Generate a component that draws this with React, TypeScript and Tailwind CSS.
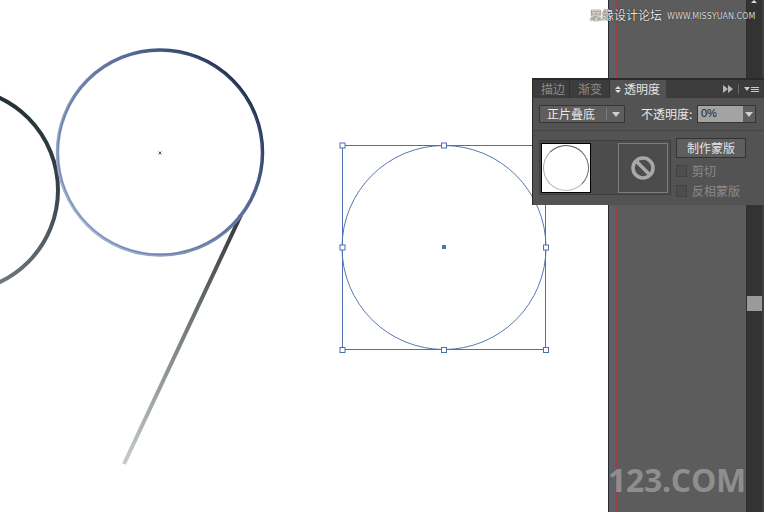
const cjk = 'font-["Noto_Sans_CJK_SC","Liberation_Sans",sans-serif]';

function Handle({ x, y }: { x: number; y: number }) {
  return <rect x={x - 2.5} y={y - 2.5} width={5} height={5} fill="#fff" stroke="#4f6fae" />;
}

function Artwork() {
  return (
    <svg className="h-[512px] w-[608px]" viewBox="0 0 608 512" fill="none">
      <defs>
        <linearGradient id="leftRing" x1="0" y1="88" x2="0" y2="292" gradientUnits="userSpaceOnUse">
          <stop offset="0" stopColor="#222f36" />
          <stop offset="0.5" stopColor="#364349" />
          <stop offset="1" stopColor="#727b7e" />
        </linearGradient>
        <linearGradient id="mainRing" x1="250" y1="85" x2="75" y2="225" gradientUnits="userSpaceOnUse">
          <stop offset="0" stopColor="#18243f" />
          <stop offset="0.35" stopColor="#5a6f96" />
          <stop offset="1" stopColor="#aab6d3" />
        </linearGradient>
        <linearGradient id="tail" x1="243" y1="212" x2="124" y2="464" gradientUnits="userSpaceOnUse">
          <stop offset="0" stopColor="#303436" />
          <stop offset="1" stopColor="#c5cccc" />
        </linearGradient>
      </defs>

      <circle cx={-44} cy={190} r={102} stroke="url(#leftRing)" strokeWidth={4} />

      <path d="M241 215 L124 464" stroke="url(#tail)" strokeWidth={4} />
      <circle cx={160} cy={152.5} r={102.5} stroke="url(#mainRing)" strokeWidth={3.5} />
      <circle cx={160} cy={152.5} r={102} stroke="#4a66ad" strokeWidth={1} opacity={0.6} />
      <path d="M158.5 151.5 l3 3 M161.5 151.5 l-3 3" stroke="#4a5a80" strokeWidth={1} />

      <circle cx={444} cy={247.5} r={102} stroke="#5876b4" strokeWidth={1} />
      <rect x={342.5} y={145.5} width={203} height={204} stroke="#4f6fae" strokeWidth={1} />
      <Handle x={342.5} y={145.5} />
      <Handle x={444} y={145.5} />
      <Handle x={546} y={145.5} />
      <Handle x={342.5} y={247.5} />
      <Handle x={546} y={247.5} />
      <Handle x={342.5} y={350} />
      <Handle x={444} y={350} />
      <Handle x={546} y={350} />
      <rect x={442} y={245} width={4} height={4} fill="#4a74b8" />
    </svg>
  );
}

function DropArrow() {
  return <span className="h-0 w-0 border-x-[4px] border-t-[5px] border-x-transparent border-t-[#d0d0d0]" />;
}

function Checkbox({ label }: { label: string }) {
  return (
    <div className="flex h-[20px] items-center gap-[5px]">
      <span className="h-[12px] w-[11px] border border-[#424242] bg-[#4d4d4d]" />
      <span className="text-[12px] leading-none text-[#8a8a8a]">{label}</span>
    </div>
  );
}

function TransparencyPanel() {
  return (
    <div className={`absolute top-[78px] left-[532px] w-[232px] border-t-2 border-l border-[#2a2a2a] bg-[#535353] ${cjk}`}>
      <div className="flex h-[18px] items-stretch bg-[#3c3c3c] text-[12px] leading-[18px]">
        <div className="w-[37px] border-r border-[#2e2e2e] pl-[8px] text-[#8c8c8c]">描边</div>
        <div className="w-[40px] border-r border-[#2e2e2e] pl-[8px] text-[#8c8c8c]">渐变</div>
        <div className="flex w-[56px] items-center gap-[3px] bg-[#535353] pl-[5px] text-[#e4e4e4]">
          <span className="flex flex-col gap-px">
            <span className="h-0 w-0 border-x-[3px] border-b-[3px] border-x-transparent border-b-[#ddd]" />
            <span className="h-0 w-0 border-x-[3px] border-t-[3px] border-x-transparent border-t-[#ddd]" />
          </span>
          透明度
        </div>
        <div className="ml-auto flex items-center gap-[5px] pr-[5px]">
          <span className="flex">
            <span className="h-0 w-0 border-y-[4px] border-l-[5px] border-y-transparent border-l-[#b5b5b5]" />
            <span className="h-0 w-0 border-y-[4px] border-l-[5px] border-y-transparent border-l-[#b5b5b5]" />
          </span>
          <span className="h-[10px] w-px bg-[#666]" />
          <span className="flex items-center gap-px">
            <span className="h-0 w-0 border-x-[3px] border-t-[4px] border-x-transparent border-t-[#c8c8c8]" />
            <span className="flex flex-col gap-px">
              <span className="h-px w-[8px] bg-[#c8c8c8]" />
              <span className="h-px w-[8px] bg-[#c8c8c8]" />
              <span className="h-px w-[8px] bg-[#c8c8c8]" />
            </span>
          </span>
        </div>
      </div>

      <div className="flex h-[33px] items-center border-b border-[#464646] pr-[8px] pl-[6px]">
        <div className="flex h-[18px] w-[86px] items-center border border-[#363636] bg-[#5e5e5e] text-[12px] text-[#e8e8e8]">
          <span className="w-[66px] pl-[7px] leading-none">正片叠底</span>
          <span className="h-[12px] w-px bg-[#7c7c7c]" />
          <span className="flex flex-1 justify-center"><DropArrow /></span>
        </div>
        <span className="ml-[16px] text-[12px] leading-none text-[#e8e8e8]">不透明度:</span>
        <div className="ml-auto flex h-[18px] w-[59px] items-stretch border border-[#363636]">
          <span className="w-[45px] bg-[#a3a3a3] pl-[3px] font-['Liberation_Sans',sans-serif] text-[11px] leading-[15px] text-[#222]">0%</span>
          <span className="flex flex-1 items-center justify-center bg-[#5e5e5e]"><DropArrow /></span>
        </div>
      </div>

      <div className="flex gap-[5px] pt-[7px] pr-[18px] pb-[4px] pl-[6px]">
        <div className="mt-[2px] flex h-[55px] w-[132px] items-center border border-[#3e3e3e] bg-[#4c4c4c] pl-[1px]">
          <div className="flex h-[50px] w-[50px] items-center justify-center border border-black bg-white">
            <span className="h-[46px] w-[46px] rounded-full border border-t-[#555] border-r-[#666] border-b-[#bbb] border-l-[#aaa]" />
          </div>
          <div className="ml-[27px] flex h-[50px] w-[50px] items-center justify-center border border-[#7d7d7d]">
            <svg width="26" height="26" viewBox="0 0 26 26" fill="none" stroke="#a8a8a8" strokeWidth="3.6">
              <circle cx="13" cy="13" r="10" />
              <path d="M6 6 L20 20" />
            </svg>
          </div>
        </div>
        <div className="flex flex-1 flex-col">
          <div className="flex h-[20px] items-center justify-center border border-[#333] bg-[#5e5e5e] text-[12px] leading-none text-[#e4e4e4]">制作蒙版</div>
          <div className="mt-[3px]"><Checkbox label="剪切" /></div>
          <Checkbox label="反相蒙版" />
        </div>
      </div>
    </div>
  );
}

export default function App() {
  return (
    <div className="relative flex h-[512px] w-[764px] overflow-hidden bg-white">
      <Artwork />

      <div className="relative flex w-[138px] border-l border-[#2b2b2b] bg-[#5c5c5c]">
        <div className="w-[7px] bg-[#5a6066]" />
        <div className="w-[2px] bg-[#9a3f48]" />
        <span className="absolute top-[458px] right-0 font-['Open_Sans',sans-serif] text-[32px] leading-[44px] font-bold tracking-[-0.3px] whitespace-nowrap text-[#8e8e8e]">123.COM</span>
      </div>

      <div className="relative flex w-[18px] flex-col border-l border-[#2f2f2f] border-r-2 border-r-[#3f3f3f] bg-[#333333] pt-[296px]">
        <span className="absolute top-0 left-[4px] h-0 w-0 border-x-[3px] border-b-[3px] border-x-transparent border-b-[#ddd]" />
        <div className="h-[15px] w-[15px] bg-[#9a9a9a]" />
      </div>

      <TransparencyPanel />

      <span className={`absolute top-[7px] left-[590px] text-[12px] leading-[16px] whitespace-nowrap text-[#e4e4e4] [text-shadow:0_0_1px_#222,0_0_1px_#222] ${cjk}`}>思缘设计论坛</span>
      <span className="absolute top-[11px] left-[667px] font-['DejaVu_Sans',sans-serif] text-[8px] leading-[12px] whitespace-nowrap text-[#d8d8d8] [text-shadow:0_0_1px_#222]">WWW.MISSYUAN.COM</span>
    </div>
  );
}
